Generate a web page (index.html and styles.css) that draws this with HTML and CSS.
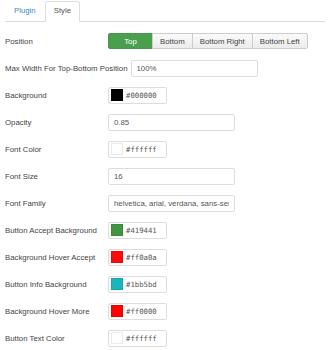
FILE: index.html
```html
<!DOCTYPE html>
<html lang="en">
<head>
    <meta charset="UTF-8">
    <title>Style Settings</title>
    <link rel="stylesheet" href="styles.css">
</head>
<body>
    <ul class="tabs">
        <li><a href="#">Plugin</a></li>
        <li class="active"><a href="#">Style</a></li>
    </ul>

    <form class="settings">
        <div class="row">
            <label>Position</label>
            <div class="btn-group">
                <button type="button" class="active">Top</button>
                <button type="button">Bottom</button>
                <button type="button">Bottom Right</button>
                <button type="button">Bottom Left</button>
            </div>
        </div>
        <div class="row">
            <label>Max Width For Top-Bottom Position</label>
            <input type="text" value="100%">
        </div>
        <div class="row">
            <label>Background</label>
            <div class="color-field"><span class="swatch" style="background:#000000"></span>#000000</div>
        </div>
        <div class="row">
            <label>Opacity</label>
            <input type="text" value="0.85">
        </div>
        <div class="row">
            <label>Font Color</label>
            <div class="color-field"><span class="swatch" style="background:#ffffff"></span>#ffffff</div>
        </div>
        <div class="row">
            <label>Font Size</label>
            <input type="text" value="16">
        </div>
        <div class="row">
            <label>Font Family</label>
            <input type="text" value="helvetica, arial, verdana, sans-serif">
        </div>
        <div class="row">
            <label>Button Accept Background</label>
            <div class="color-field"><span class="swatch" style="background:#419441"></span>#419441</div>
        </div>
        <div class="row">
            <label>Background Hover Accept</label>
            <div class="color-field"><span class="swatch" style="background:#ff0a0a"></span>#ff0a0a</div>
        </div>
        <div class="row">
            <label>Button Info Background</label>
            <div class="color-field"><span class="swatch" style="background:#1bb5bd"></span>#1bb5bd</div>
        </div>
        <div class="row">
            <label>Background Hover More</label>
            <div class="color-field"><span class="swatch" style="background:#ff0000"></span>#ff0000</div>
        </div>
        <div class="row">
            <label>Button Text Color</label>
            <div class="color-field"><span class="swatch" style="background:#ffffff"></span>#ffffff</div>
        </div>
    </form>
</body>
</html>
```

FILE: styles.css
```css
/* Base */
body {
    margin: 0;
    padding: 0 5px;
    background-color: #fff;
    color: #333;
    font-family: 'Liberation Sans', Arial, sans-serif;
    font-size: 7.8px;
}

/* Tabs */
.tabs {
    list-style: none;
    margin: 0;
    padding: 1px 0 0;
    display: flex;
    border-bottom: 1px solid #ddd;
}
.tabs li {
    margin-bottom: -1px;
}
.tabs li a {
    display: block;
    padding: 4px 8px 5px;
    line-height: 10px;
    color: #4185c8;
    text-decoration: none;
    border: 1px solid transparent;
    border-radius: 3px 3px 0 0;
}
.tabs li.active a {
    color: #555;
    background-color: #fff;
    border-color: #ddd #ddd transparent;
}

/* Settings form */
.settings {
    padding-top: 11px;
}
.row {
    display: flex;
    align-items: center;
    height: 16px;
    margin-bottom: 11px;
}
.row label {
    min-width: 100px;
    padding-right: 3px;
    color: #444;
    white-space: nowrap;
}

.btn-group {
    display: flex;
}
.btn-group button {
    height: 16px;
    padding: 0 7px;
    margin: 0 0 0 -1px;
    font-family: inherit;
    font-size: 7.8px;
    color: #444;
    white-space: nowrap;
    background: linear-gradient(#fafafa, #ececec);
    border: 1px solid #ccc;
    border-radius: 0;
}
.btn-group button:first-child {
    margin-left: 0;
    border-radius: 2px 0 0 2px;
}
.btn-group button:last-child {
    border-radius: 0 2px 2px 0;
}
.btn-group button.active {
    width: 45px;
    color: #fff;
    background: #4a9f4e;
    border-color: #459948;
}

input[type="text"] {
    box-sizing: border-box;
    width: 127px;
    height: 17px;
    padding: 0 5px;
    font-family: inherit;
    font-size: 7.8px;
    color: #555;
    border: 1px solid #ddd;
    border-radius: 2px;
}

.color-field {
    box-sizing: border-box;
    display: flex;
    align-items: center;
    width: 59px;
    height: 17px;
    padding: 0 2px;
    border: 1px solid #ddd;
    border-radius: 2px;
    font-family: 'DejaVu Sans Mono', monospace;
    font-size: 7.3px;
    color: #555;
}
.swatch {
    box-sizing: border-box;
    width: 12px;
    height: 12px;
    margin-right: 3px;
    border: 1px solid rgba(0, 0, 0, 0.08);
}
```
